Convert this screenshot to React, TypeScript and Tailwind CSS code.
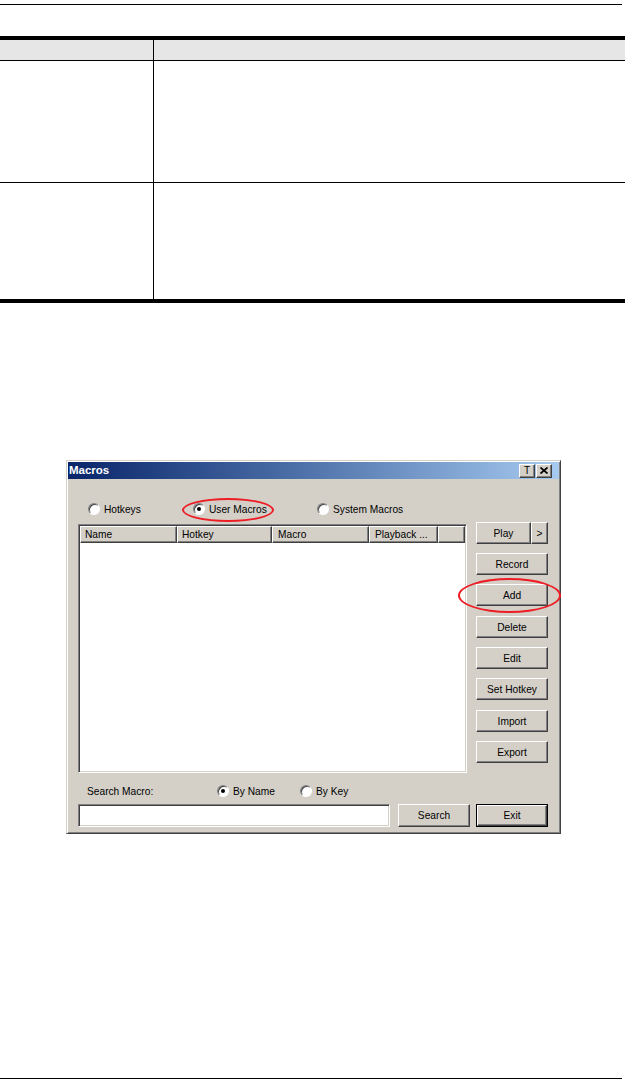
import React from "react";

const raised =
  "bg-[#d4d0c8] border border-t-white border-l-white border-r-[#404040] border-b-[#404040] shadow-[inset_-1px_-1px_#808080]";
const sunken =
  "border border-t-[#808080] border-l-[#808080] border-r-white border-b-white shadow-[inset_1px_1px_#404040,inset_-1px_-1px_#d4d0c8]";

function Radio({ checked, label }: { checked?: boolean; label: string }) {
  return (
    <div className="flex items-center h-[12px]">
      <span className="relative block w-[12px] h-[12px] shrink-0 rounded-full bg-white border border-t-[#808080] border-l-[#808080] border-r-white border-b-white shadow-[inset_1px_1px_#404040]">
        {checked && (
          <span className="absolute left-[3px] top-[3px] w-[4px] h-[4px] rounded-full bg-black" />
        )}
      </span>
      <span className="ml-[4px] whitespace-nowrap">{label}</span>
    </div>
  );
}

function Btn({ label, className = "" }: { label: string; className?: string }) {
  return (
    <div className={`${raised} h-[22px] w-[72px] flex items-center justify-center ${className}`}>
      {label}
    </div>
  );
}

export default function App() {
  return (
    <div className="relative w-[625px] h-[1082px] bg-white text-black [font-family:'Liberation_Sans',Arial,sans-serif] overflow-hidden">
      {/* top rule */}
      <div className="mt-[4px] h-px w-[622px] bg-black" />

      {/* table */}
      <div className="mt-[31px] w-[625px]">
        <div className="h-[4px] bg-black" />
        <div className="flex h-[20px] bg-[#e6e6e6]">
          <div className="w-[154px] border-r border-black" />
          <div className="flex-1" />
        </div>
        <div className="h-px bg-black" />
        <div className="flex h-[121px]">
          <div className="w-[154px] border-r border-black" />
          <div className="flex-1" />
        </div>
        <div className="h-px bg-black" />
        <div className="flex h-[116px]">
          <div className="w-[154px] border-r border-black" />
          <div className="flex-1" />
        </div>
        <div className="h-[4px] bg-black" />
      </div>

      {/* Macros window */}
      <div className="relative mt-[157px] ml-[66px] w-[495px] h-[374px] bg-[#d4d0c8] border border-t-[#d4d0c8] border-l-[#d4d0c8] border-r-[#404040] border-b-[#404040] shadow-[inset_1px_1px_white,inset_-1px_-1px_#808080] p-[1px] text-[10.2px] leading-[13px]">
        {/* title bar */}
        <div className="h-[17px] flex items-center justify-between bg-gradient-to-r from-[#0a246a] to-[#a6caf0] pl-[1px] pr-[7px]">
          <span className="text-white font-bold text-[11.5px]">Macros</span>
          <div className="flex gap-[1px]">
            <div className={`${raised} w-[16px] h-[14px] flex items-center justify-center text-[10px] leading-none`}>
              T
            </div>
            <div className={`${raised} w-[16px] h-[14px] flex items-center justify-center`}>
              <svg width="8" height="7" viewBox="0 0 8 7">
                <path d="M0.5 0.5 L7.5 6.5 M7.5 0.5 L0.5 6.5" stroke="black" strokeWidth="1.7" />
              </svg>
            </div>
          </div>
        </div>

        {/* radios */}
        <div className="mt-[24px] pl-[20px] flex h-[12px]">
          <div className="w-[105px]">
            <Radio label="Hotkeys" />
          </div>
          <div className="w-[124px]">
            <Radio checked label="User Macros" />
          </div>
          <div>
            <Radio label="System Macros" />
          </div>
        </div>

        {/* list + buttons */}
        <div className="mt-[7px] ml-[10px] flex items-start">
          <div className={`${sunken} mt-[2px] w-[389px] h-[249px] bg-white p-[1px]`}>
            <div className="flex h-[17px]">
              <div className={`${raised} w-[97px] pl-[4px] flex items-center`}>Name</div>
              <div className={`${raised} w-[95px] pl-[4px] flex items-center`}>Hotkey</div>
              <div className={`${raised} w-[97px] pl-[5px] flex items-center`}>Macro</div>
              <div className={`${raised} w-[69px] pl-[5px] flex items-center whitespace-nowrap`}>Playback ...</div>
              <div className={`${raised} flex-1`} />
            </div>
          </div>
          <div className="ml-[9px] w-[72px] flex flex-col">
            <div className="flex h-[22px]">
              <div className={`${raised} w-[55px] h-[22px] flex items-center justify-center`}>Play</div>
              <div className={`${raised} w-[17px] h-[22px] flex items-center justify-center`}>&gt;</div>
            </div>
            <Btn label="Record" className="mt-[9px]" />
            <Btn label="Add" className="mt-[9px]" />
            <Btn label="Delete" className="mt-[10px]" />
            <Btn label="Edit" className="mt-[9px]" />
            <Btn label="Set Hotkey" className="mt-[9px]" />
            <Btn label="Import" className="mt-[10px]" />
            <Btn label="Export" className="mt-[9px]" />
          </div>
        </div>

        {/* search options */}
        <div className="mt-[12px] pl-[19px] flex items-center h-[12px]">
          <div className="w-[130px] whitespace-nowrap">Search Macro:</div>
          <div className="w-[83px]">
            <Radio checked label="By Name" />
          </div>
          <div>
            <Radio label="By Key" />
          </div>
        </div>

        {/* search input row */}
        <div className="mt-[7px] ml-[10px] flex items-start">
          <div className={`${sunken} w-[312px] h-[23px] bg-white`} />
          <Btn label="Search" className="ml-[8px] h-[23px]" />
          <div className="ml-[6px] w-[72px] h-[23px] border border-black">
            <div className={`${raised} w-full h-full flex items-center justify-center`}>Exit</div>
          </div>
        </div>

        {/* red annotation ellipses */}
        <div className="absolute left-[115px] top-[37px] w-[92px] h-[24px] rounded-[50%] border-2 border-[#ee1c24]" />
        <div className="absolute left-[391px] top-[117px] w-[103px] h-[35px] rounded-[50%] border-2 border-[#ee1c24]" />
      </div>

      {/* bottom rule */}
      <div className="mt-[244px] h-px w-[622px] bg-black" />
    </div>
  );
}
